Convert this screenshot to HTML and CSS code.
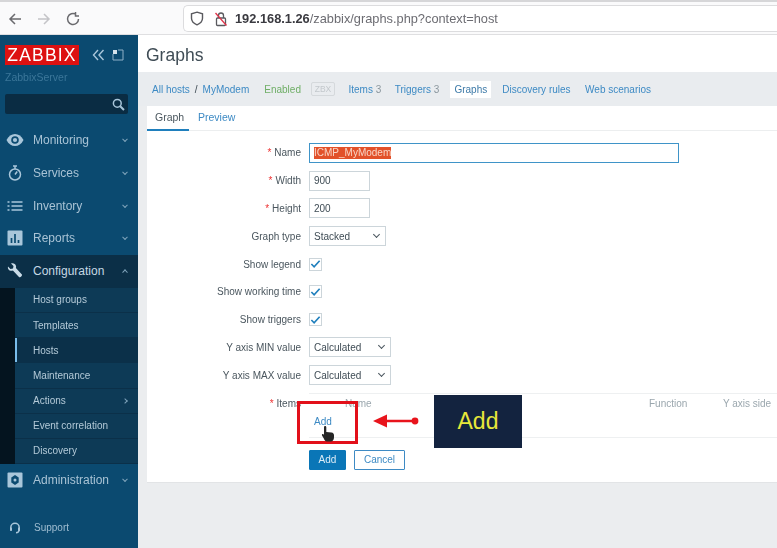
FILE: index.html
```html
<!DOCTYPE html>
<html lang="en">
<head>
<meta charset="utf-8">
<title>Graphs</title>
<link rel="stylesheet" href="styles.css">
</head>
<body>
<div class="page">
  <header class="browser">
    <svg class="nav-ico" width="16" height="16" viewBox="0 0 16 16"><path d="M14 8H3M8 3L3 8l5 5" fill="none" stroke="#6a6a6e" stroke-width="1.500"/></svg>
    <svg class="nav-ico" width="16" height="16" viewBox="0 0 16 16"><path d="M2 8h11M8 3l5 5-5 5" fill="none" stroke="#c4c4c8" stroke-width="1.500"/></svg>
    <svg class="nav-ico" width="16" height="16" viewBox="0 0 16 16"><path d="M13.500 8A5.500 5.500 0 1 1 11 3.400M10.500 1v4h3.500" fill="none" stroke="#6a6a6e" stroke-width="1.500"/></svg>
    <div class="urlbar">
      <svg width="14" height="15" viewBox="0 0 14 15"><path d="M7 1.200l5.500 1.600v4.400c0 3-2.400 5.300-5.500 6.600C3.900 12.500 1.500 10.200 1.500 7.200V2.800z" fill="none" stroke="#5a5a5f" stroke-width="1.400"/></svg>
      <svg class="lock" width="14" height="16" viewBox="0 0 14 16"><rect x="2.500" y="7" width="9" height="7.500" rx="1" fill="none" stroke="#5a5a5f" stroke-width="1.300"/><path d="M4.500 7V4.500a2.500 2.500 0 0 1 5 0V7" fill="none" stroke="#5a5a5f" stroke-width="1.300"/><path d="M1.500 2l11 12.500" stroke="#e0344a" stroke-width="1.300"/></svg>
      <span class="url"><b>192.168.1.26</b>/zabbix/graphs.php?context=host</span>
    </div>
  </header>
  <div class="app">
    <aside class="sidebar">
      <div class="brand-row">
        <span class="logo">ZABBIX</span>
        <span class="collapse">
          <svg width="13" height="12" viewBox="0 0 13 12"><path d="M6 1L1.500 6 6 11M11.500 1L7 6l4.500 5" fill="none" stroke="#a9c6da" stroke-width="1.400"/></svg>
          <svg width="12" height="12" viewBox="0 0 12 12"><path d="M1 5v6h10V1H6" fill="none" stroke="#8fb0c7" stroke-width="1"/><path d="M1 1h4v4H1z" fill="#d5e3ec"/></svg>
        </span>
      </div>
      <div class="server">ZabbixServer</div>
      <div class="search">
        <svg width="13" height="13" viewBox="0 0 13 13"><circle cx="5.300" cy="5.300" r="3.900" fill="none" stroke="#a9c6da" stroke-width="1.500"/><path d="M8.200 8.200L12 12" stroke="#a9c6da" stroke-width="2"/></svg>
      </div>
      <nav class="menu">
        <a class="item">
          <svg class="mi" width="18" height="14" viewBox="0 0 18 14"><path d="M.5 7c2-4 5-6 8.500-6s6.500 2 8.500 6c-2 4-5 6-8.500 6S2.500 11 .5 7z" fill="#a9c6da"/><circle cx="9" cy="7" r="3.800" fill="#0b4a70"/><circle cx="9" cy="7" r="2.100" fill="#a9c6da"/></svg>
          <span>Monitoring</span><i class="chev down"></i>
        </a>
        <a class="item">
          <svg class="mi" width="18" height="17" viewBox="0 0 18 17"><circle cx="9" cy="10" r="5.500" fill="none" stroke="#a9c6da" stroke-width="1.500"/><path d="M7 1.500h4M9 2v2.500M9 10l2.200-3" stroke="#a9c6da" stroke-width="1.500" fill="none"/></svg>
          <span>Services</span><i class="chev down"></i>
        </a>
        <a class="item">
          <svg class="mi" width="18" height="12" viewBox="0 0 18 12"><path d="M1.500 2h2M1.500 6h2M1.500 10h2M5.500 2h11M5.500 6h11M5.500 10h11" stroke="#a9c6da" stroke-width="1.500"/></svg>
          <span>Inventory</span><i class="chev down"></i>
        </a>
        <a class="item">
          <svg class="mi" width="18" height="16" viewBox="0 0 18 16"><rect x="1.500" y="0.500" width="15" height="15" rx="1" fill="#a9c6da"/><path d="M5.500 8v5M9 4v9M12.500 10v3" stroke="#0b4a70" stroke-width="1.700"/></svg>
          <span>Reports</span><i class="chev down"></i>
        </a>
        <a class="item current">
          <svg class="mi" width="18" height="18" viewBox="0 0 18 18"><path d="M2 4.500L4.500 7 7 6.500l.5-2.500L5 1.500c2-.8 4.500 0 5 2.500.2.800.1 1.500-.1 2.100l6 6.400c.8.900-1.800 3.500-2.700 2.700L6.900 8.600C4 9.600 1.300 7.500 2 4.500z" fill="#c9dbe7"/></svg>
          <span>Configuration</span><i class="chev up"></i>
        </a>
        <div class="submenu">
          <a class="sub">Host groups</a>
          <a class="sub">Templates</a>
          <a class="sub active">Hosts</a>
          <a class="sub">Maintenance</a>
          <a class="sub">Actions<i class="chev right"></i></a>
          <a class="sub">Event correlation</a>
          <a class="sub">Discovery</a>
        </div>
        <a class="item admin">
          <svg class="mi" width="18" height="16" viewBox="0 0 18 16"><rect x="1.500" y="0.500" width="15" height="15" rx="1" fill="#a9c6da"/><path d="M9 3l3.700 2.500v5L9 13l-3.700-2.500v-5z" fill="#0b4a70"/><circle cx="9" cy="8" r="1.500" fill="#a9c6da"/></svg>
          <span>Administration</span><i class="chev down"></i>
        </a>
      </nav>
      <a class="support">
        <svg width="12" height="12" viewBox="0 0 12 12"><path d="M1.800 7V5.500a4.200 4.200 0 0 1 8.400 0V7M7 10.800c2 0 3-.800 3.200-3" fill="none" stroke="#a9c6da" stroke-width="1.500"/><rect x="1" y="5.500" width="2" height="3.500" rx=".8" fill="#a9c6da"/><rect x="9" y="5.500" width="2" height="3.500" rx=".8" fill="#a9c6da"/></svg>
        <span>Support</span>
      </a>
    </aside>
    <main class="main">
      <h1 class="title">Graphs</h1>
      <div class="hostnav">
        <a>All hosts</a><span class="slash">/</span><a class="host">MyModem</a>
        <span class="enabled">Enabled</span><span class="zbx">ZBX</span>
        <a class="tab-link">Items <small>3</small></a>
        <a class="tab-link">Triggers <small>3</small></a>
        <a class="tab-link now">Graphs</a>
        <a class="tab-link">Discovery rules</a>
        <a class="tab-link last">Web scenarios</a>
      </div>
      <section class="card">
        <div class="tabs"><span class="tab on">Graph</span><span class="tab">Preview</span></div>
        <form class="form">
          <label class="lbl"><em>*</em> Name</label><div class="ctl"><span class="inp name"><span class="sel">ICMP_MyModem</span></span></div>
          <label class="lbl"><em>*</em> Width</label><div class="ctl"><span class="inp num">900</span></div>
          <label class="lbl"><em>*</em> Height</label><div class="ctl"><span class="inp num">200</span></div>
          <label class="lbl">Graph type</label><div class="ctl"><span class="inp drop type">Stacked<i class="caret"></i></span></div>
          <label class="lbl">Show legend</label><div class="ctl"><span class="check"><svg width="12" height="10" viewBox="0 0 12 10"><path d="M1.500 5l3 3 6-6.500" fill="none" stroke="#1f7fbd" stroke-width="1.800"/></svg></span></div>
          <label class="lbl">Show working time</label><div class="ctl"><span class="check"><svg width="12" height="10" viewBox="0 0 12 10"><path d="M1.500 5l3 3 6-6.500" fill="none" stroke="#1f7fbd" stroke-width="1.800"/></svg></span></div>
          <label class="lbl">Show triggers</label><div class="ctl"><span class="check"><svg width="12" height="10" viewBox="0 0 12 10"><path d="M1.500 5l3 3 6-6.500" fill="none" stroke="#1f7fbd" stroke-width="1.800"/></svg></span></div>
          <label class="lbl">Y axis MIN value</label><div class="ctl"><span class="inp drop axis">Calculated<i class="caret"></i></span></div>
          <label class="lbl">Y axis MAX value</label><div class="ctl"><span class="inp drop axis">Calculated<i class="caret"></i></span></div>
          <label class="lbl items-lbl"><em>*</em> Items</label>
          <div class="items">
            <div class="items-head"><span class="h-name">Name</span><span class="h-fn">Function</span><span class="h-side">Y axis side</span></div>
            <a class="add-link">Add</a>
          </div>
          <div class="actions"><span class="btn primary">Add</span><span class="btn ghost">Cancel</span></div>
        </form>
      </section>
    </main>
  </div>
  <div class="red-box"></div>
  <svg class="cursor" width="14" height="17" viewBox="0 0 14 17"><path d="M3 1.500c.9-1 2.300-.6 2.300.8V7l5.200.6c1.700.3 2.500 1.200 2.500 2.700v2c0 2.400-1.200 4.200-3.200 4.200H6c-1.500 0-2.500-1.300-3.200-3L1 10.500c-.4-1.400 1-1.900 2-.8z" fill="#262626"/></svg>
  <svg class="arrow" width="48" height="16" viewBox="0 0 48 16"><path d="M14 8h30" stroke="#e8141c" stroke-width="2.500"/><path d="M1 8l14-6.500v13z" fill="#e8141c"/><circle cx="43" cy="8" r="3.400" fill="#e8141c"/></svg>
  <div class="callout">Add</div>
</div>
</body>
</html>
```
FILE: styles.css
```css
* { box-sizing: border-box; }
html, body { margin: 0; height: 100%; overflow: hidden; }
body { font-family: "Liberation Sans", Arial, sans-serif; font-size: 11px; color: #3f4c55; background: #ebedef; }
.page { position: relative; width: 777px; height: 548px; overflow: hidden; filter: blur(0.55px); }

.browser { height: 35px; padding: 5px 0 0 7px; display: flex; align-items: flex-start; background: #fafafb; border-top: 2px solid #d6d6d8; border-bottom: 1px solid #dfdfe1; }
.nav-ico { margin: 4px 13px 0 0; flex: none; }
.nav-ico:nth-child(3) { margin-right: 0; }
.urlbar { margin: -2px 0 0 102px; flex: 1; height: 27px; display: flex; align-items: center; gap: 7px; padding-left: 6px; background: #fff; border: 1px solid #dcdcde; border-right: 0; border-radius: 5px 0 0 5px; }
.lock { margin-left: 3px; }
.url { font-size: 12.800px; color: #6c6c72; }
.url b { color: #3a3a40; }

.app { display: flex; height: 513px; }
.sidebar { width: 138px; flex: none; background: #0b4a70; display: flex; flex-direction: column; color: #a9c3d5; }
.brand-row { display: flex; align-items: center; padding: 10px 0 0 5px; height: 30px; }
.logo { width: 74px; height: 20px; background: #d11; color: #fff; font-size: 17.500px; line-height: 20px; letter-spacing: 1.200px; text-align: center; }
.collapse { display: flex; align-items: center; gap: 7px; margin-left: 13px; }
.server { margin: 6px 0 0 5px; font-size: 10.500px; line-height: 13px; color: #3b7699; }
.search { margin: 10px 0 0 5px; width: 123px; height: 20px; background: #0a2c43; border-radius: 2px; display: flex; align-items: center; justify-content: flex-end; padding-right: 3px; }
.menu { margin-top: 10px; display: flex; flex-direction: column; }
.item { height: 32.700px; display: flex; align-items: center; position: relative; padding-left: 33px; font-size: 12px; }
.mi { position: absolute; left: 6px; top: 50%; transform: translateY(-50%); }
.item.current { height: 33px; background: #0b2f47; color: #c6d8e4; }
.chev { position: absolute; right: 11px; top: 50%; width: 4px; height: 4px; border: solid #7fa3bb; border-width: 0 1px 1px 0; }
.chev.down { transform: translateY(-70%) rotate(45deg); }
.chev.up { transform: translateY(-20%) rotate(225deg); }
.chev.right { transform: translateY(-50%) rotate(-45deg); }
.submenu { border-left: 15px solid #04141f; background: #0d3a56; }
.sub { display: flex; align-items: center; position: relative; height: 25.200px; padding-left: 18px; font-size: 10px; color: #b4cad8; border-bottom: 1px solid #0b3049; }
.sub.active { background: #0b3049; box-shadow: inset 2px 0 0 #79bdeb; }
.support { display: flex; align-items: center; gap: 13px; margin-top: 25px; padding-left: 9px; font-size: 10px; color: #9fbdd1; }

.main { flex: 1; min-width: 0; background: #ebedef; }
.title { margin: 0; height: 37px; padding: 9px 0 0 8px; background: #fff; font-weight: 400; font-size: 17.500px; line-height: 22px; color: #3f4c55; }
.hostnav { height: 34px; display: flex; align-items: center; padding-left: 14px; background: #e9ecef; font-size: 10px; color: #3d8ac4; white-space: nowrap; }
.slash { margin: 0 5px; color: #3f4c55; }
.enabled { margin-left: 15px; color: #6fae66; }
.zbx { margin-left: 10px; width: 24px; height: 14px; line-height: 12px; text-align: center; font-size: 8.500px; color: #c3c8cc; border: 1px solid #d5d9dc; border-radius: 2px; }
.tab-link { margin-left: 13.500px; padding: 3px 0; }
.tab-link small { font-size: 10px; color: #8b979e; }
.tab-link.now { margin-left: 11px; padding: 3px 4px; background: #fff; color: #3d7aa8; }
.tab-link.now + .tab-link { margin-left: 11px; }
.tab-link.last { margin-left: 14.500px; }
.card { margin-left: 9px; height: 377px; background: #fff; border-bottom: 1px solid #e2e4e6; }
.tabs { height: 25px; display: flex; border-bottom: 1px solid #eceeef; font-size: 10.500px; }
.tab { padding: 5px 8px 0; color: #3d8ac4; }
.tab.on { width: 42px; color: #4a565e; border-bottom: 2px solid #1f7fbd; height: 25px; }
.tab + .tab { padding-left: 9px; }

.form { display: grid; grid-template-columns: 155px 1fr; column-gap: 7px; padding-top: 8px; }
.lbl { height: 27.800px; display: flex; align-items: center; justify-content: flex-end; gap: 3px; padding-right: 1px; font-size: 10px; color: #4a565e; white-space: nowrap; }
.lbl em { font-style: normal; color: #e33; }
.ctl { height: 27.800px; display: flex; align-items: center; }
.inp { height: 20px; display: flex; align-items: center; padding-left: 4px; border: 1px solid #ccd5da; font-size: 10px; color: #3f4c55; position: relative; }
.name { width: 370px; border-color: #3f94c8; }
.sel { background: #e2512a; color: #f8d5c6; line-height: 12px; }
.num { width: 61px; }
.type { width: 77px; }
.axis { width: 82px; }
.caret { position: absolute; right: 6px; top: 5px; width: 5px; height: 5px; border: solid #4a565e; border-width: 0 1px 1px 0; transform: rotate(45deg); }
.check { width: 13px; height: 13px; border: 1px solid #ccd5da; display: flex; align-items: center; justify-content: center; }
.items-lbl { height: 27px; align-items: flex-start; margin-top: 4px; padding-top: 5px; }
.items { margin-top: 4px; height: 45px; border-top: 1px solid #eef0f1; border-bottom: 1px solid #eef0f1; position: relative; font-size: 10px; }
.items-head { position: relative; height: 22px; color: #9ba7ae; }
.items-head span { position: absolute; top: 4px; }
.h-name { left: 36px; }
.h-fn { left: 340px; }
.h-side { left: 414px; }
.add-link { display: block; margin: 0 0 0 5px; color: #3d8ac4; }
.actions { grid-column: 2; display: flex; gap: 8px; padding-top: 12px; }
.btn { height: 20px; line-height: 18px; text-align: center; font-size: 10px; border-radius: 1px; }
.primary { width: 37px; background: #0a76b7; border: 1px solid #0a76b7; color: #dcecf6; }
.ghost { width: 51px; border: 1px solid #3d8ac4; color: #3d8ac4; background: #fff; }

.red-box { position: absolute; left: 297px; top: 401px; width: 61px; height: 43px; border: 3px solid #e2101a; }
.cursor { position: absolute; left: 321px; top: 425px; }
.arrow { position: absolute; left: 372px; top: 413px; }
.callout { position: absolute; left: 434px; top: 395px; width: 88px; height: 53px; background: #13233f; color: #e8e83a; font-size: 23px; line-height: 53px; text-align: center; }
```
